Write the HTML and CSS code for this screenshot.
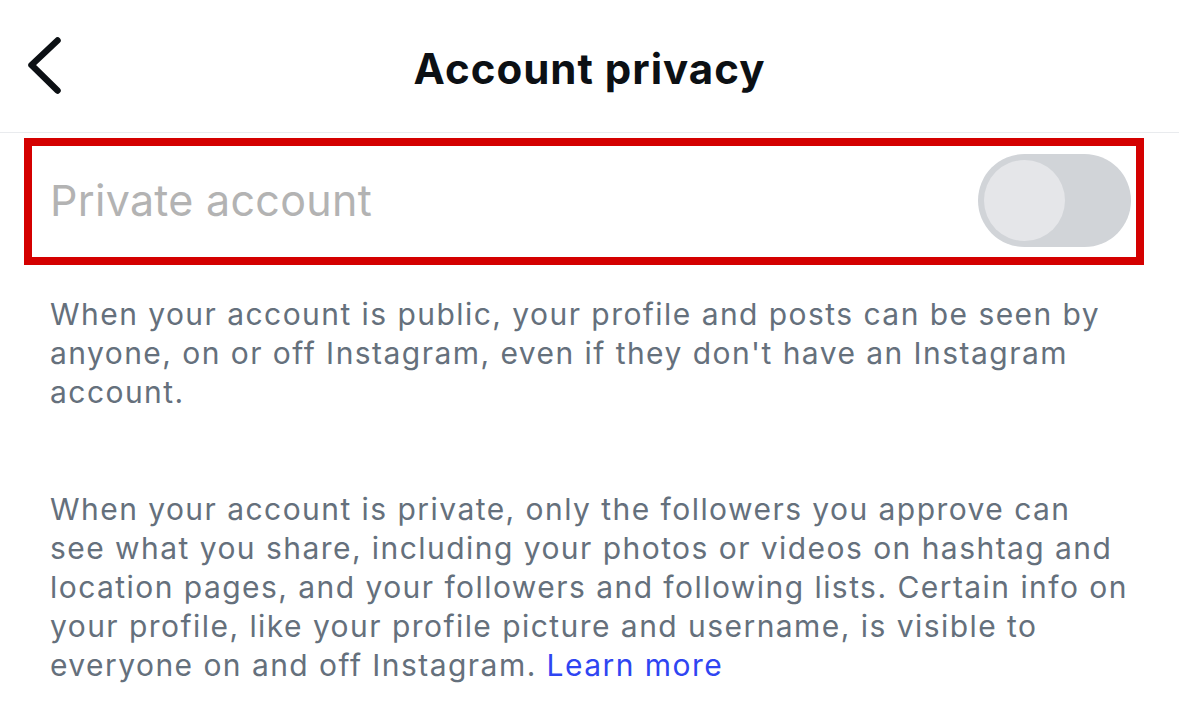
FILE: index.html
```html
<!DOCTYPE html>
<html lang="en">
<head>
<meta charset="utf-8">
<title>Account privacy</title>
<link rel="stylesheet" href="styles.css">
</head>
<body>
  <header class="topbar">
    <button class="back" aria-label="Back">
      <svg width="44" height="62" viewBox="0 0 44 62" aria-hidden="true">
        <path d="M33.5 6.5 L7.5 31 L33.5 56.5" fill="none" stroke="#0c1014" stroke-width="6.5" stroke-linecap="round" stroke-linejoin="round"/>
      </svg>
    </button>
    <h1 class="title">Account privacy</h1>
  </header>

  <section class="setting-row">
    <span class="setting-label">Private account</span>
    <span class="toggle"><span class="knob"></span></span>
  </section>

  <div class="content">
    <p class="desc">When your account is public, your profile and posts can be seen by<br>anyone, on or off Instagram, even if they don't have an Instagram<br>account.</p>
    <p class="desc desc-second">When your account is private, only the followers you approve can<br>see what you share, including your photos or videos on hashtag and<br>location pages, and your followers and following lists. Certain info on<br>your profile, like your profile picture and username, is visible to<br>everyone on and off Instagram. <a class="link" href="#">Learn more</a></p>
  </div>
</body>
</html>
```

FILE: styles.css
```css
* { box-sizing: border-box; }

html, body {
  margin: 0;
  padding: 0;
  background: #ffffff;
  font-family: Inter, "Noto Sans", "Liberation Sans", sans-serif;
  width: 1179px;
  height: 707px;
  overflow: hidden;
}

.topbar {
  position: relative;
  height: 133px;
  border-bottom: 1px solid #e9ebee;
  display: flex;
  align-items: center;
  justify-content: center;
}

.back {
  position: absolute;
  left: 24px;
  top: 34px;
  width: 44px;
  height: 62px;
  padding: 0;
  border: 0;
  background: none;
  display: block;
}

.back svg { display: block; }

.title {
  margin: 0;
  font-size: 42px;
  font-weight: 700;
  color: #0c1014;
  letter-spacing: 1px;
  padding-top: 4px;
}

.setting-row {
  margin: 5px 35px 0 24px;
  height: 127px;
  border: 8px solid #d40000;
  display: flex;
  align-items: center;
  justify-content: space-between;
  padding: 0 5px 3px 18px;
}

.setting-label {
  font-size: 43px;
  color: #b3b3b3;
  font-weight: 400;
  letter-spacing: 0.3px;
}

.toggle {
  width: 153px;
  height: 93px;
  border-radius: 47px;
  background: #d1d4d8;
  display: flex;
  align-items: center;
  padding-left: 6px;
}

.knob {
  width: 81px;
  height: 81px;
  border-radius: 50%;
  background: #e5e6e9;
}

.content {
  padding: 30px 20px 0 50px;
}

.desc {
  margin: 0;
  font-size: 30px;
  line-height: 39px;
  color: #65707c;
  letter-spacing: 1.45px;
  white-space: nowrap;
}

.desc-second {
  margin-top: 78px;
}

.link {
  color: #2f45f2;
  text-decoration: none;
}
```
